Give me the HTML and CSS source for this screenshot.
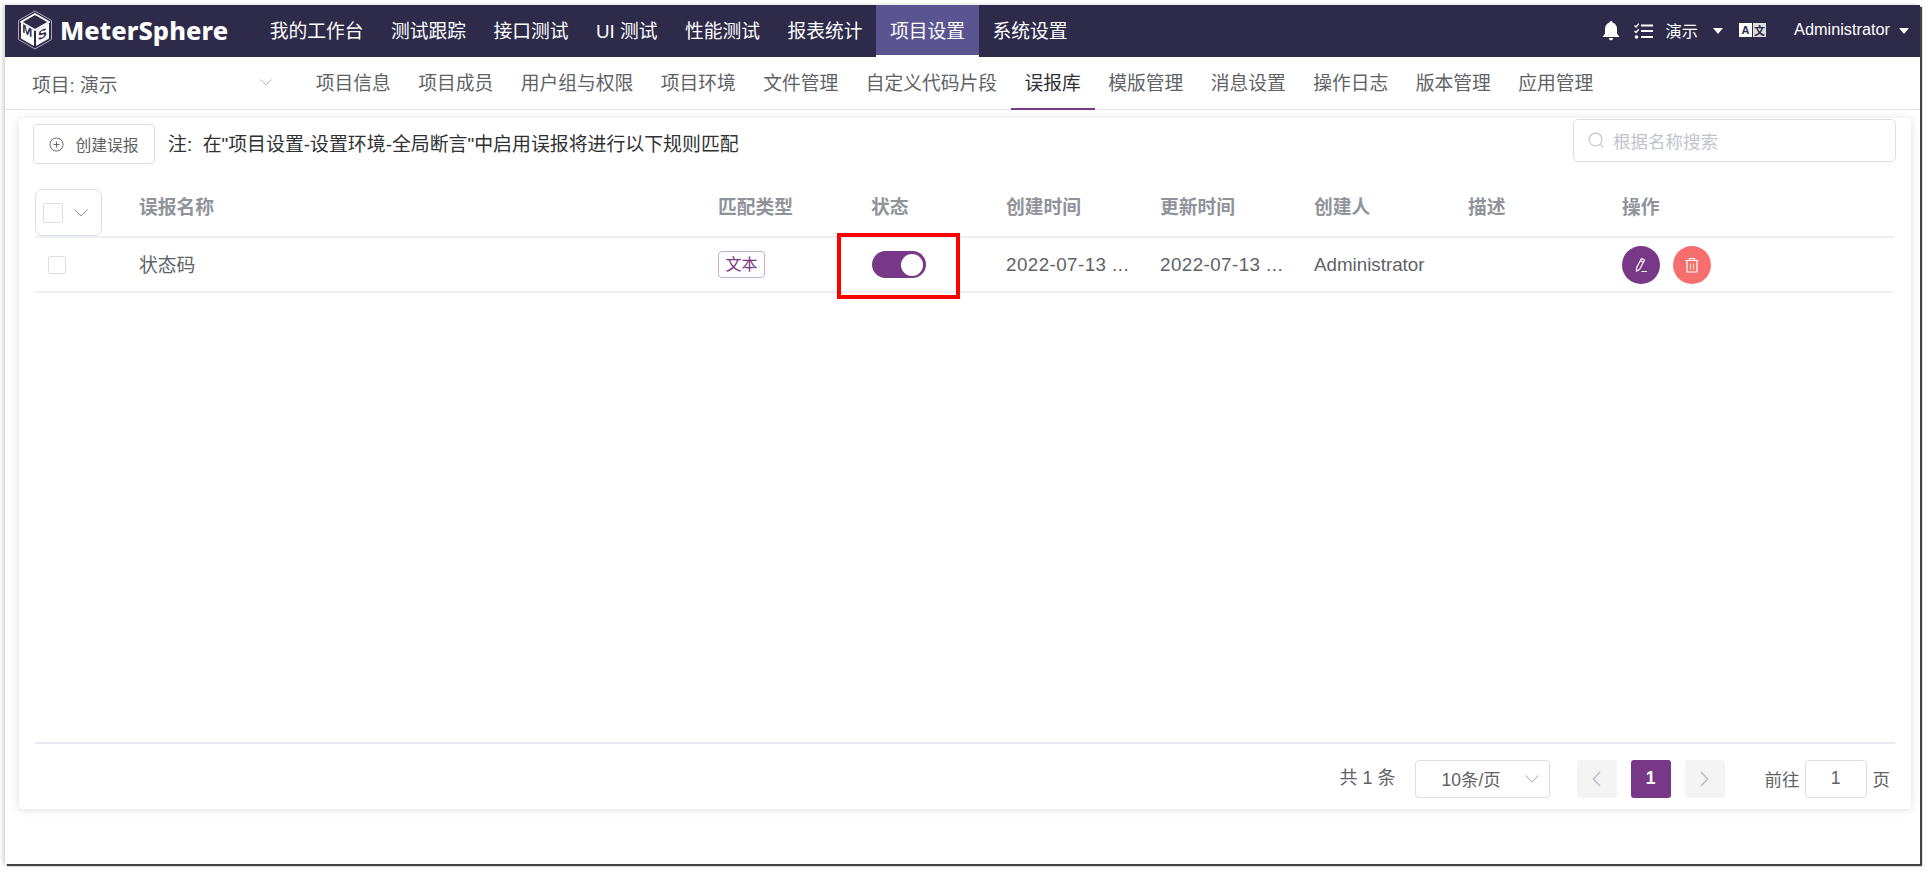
FILE: index.html
```html
<!DOCTYPE html>
<html lang="zh-CN">
<head>
    <meta charset="UTF-8">
    <meta name="viewport" content="width=device-width, initial-scale=1.0">
    <title>MeterSphere</title>
    <link rel="stylesheet" href="styles.css">
</head>
<body>
<div class="window">
    <header class="topbar">
        <div class="logo">
            <svg class="logo-cube" viewBox="0 0 36 40" width="36" height="40">
                <path d="M18 1 L34.5 10.5 V29.5 L18 39 L1.500 29.500 V10.500 Z" fill="none" stroke="#c9c8d6" stroke-width="0.8"/>
                <path d="M18 4 L32 12 L18 20 L4 12 Z" fill="#2d2a4a" stroke="#fff" stroke-width="2" stroke-linejoin="round"/>
                <path d="M4 13 L17 20.500 V36 L4 28.500 Z" fill="#fff"/>
                <path d="M32 13 L19 20.500 V36 L32 28.500 Z" fill="#fff"/>
                <text transform="matrix(1 .58 0 1 5.200 22)" class="cube-letter" font-size="12">M</text>
                <text transform="matrix(1 -.58 0 1 21 31)" class="cube-letter" font-size="13">S</text>
            </svg>
            <span class="logo-text">MeterSphere</span>
        </div>
        <nav class="main-nav">
            <a>我的工作台</a>
            <a>测试跟踪</a>
            <a>接口测试</a>
            <a>UI 测试</a>
            <a>性能测试</a>
            <a>报表统计</a>
            <a class="active">项目设置</a>
            <a>系统设置</a>
        </nav>
        <div class="top-right">
            <svg class="bell" viewBox="0 0 18 20" width="18" height="20"><path d="M9 0 C10 0 10.500 .8 10.500 1.600 C13.500 2.400 15 5 15 8 V12.500 L17.500 16 H.5 L3 12.500 V8 C3 5 4.500 2.400 7.500 1.600 C7.500 .8 8 0 9 0 Z M6.800 17 H11.200 C11 18.500 10 19.300 9 19.300 C8 19.300 7 18.500 6.800 17 Z" fill="#fff"/></svg>
            <svg class="tasks" viewBox="0 0 19 16" width="19" height="16">
                <path d="M.5 2.500 L2 4 L4.800 .8" fill="none" stroke="#fff" stroke-width="1.300"/>
                <path d="M.5 8 L2 9.500 L4.800 6.300" fill="none" stroke="#fff" stroke-width="1.300"/>
                <circle cx="2.500" cy="14" r="1.800" fill="#fff"/>
                <path d="M7 2.500 H19 M7 8 H19 M7 14 H19" stroke="#fff" stroke-width="2"/>
            </svg>
            <span class="project-name">演示</span>
            <i class="caret caret-project"></i>
            <span class="lang"><b class="lang-a">A</b><b class="lang-b">文</b></span>
            <span class="user-name">Administrator</span>
            <i class="caret caret-user"></i>
        </div>
    </header>

    <div class="subbar">
        <div class="project-select">
            <span>项目: 演示</span>
            <svg viewBox="0 0 12 7" width="12" height="7"><path d="M.5 .5 L6 6 L11.500 .5" fill="none" stroke="#b4b7bd" stroke-width="1"/></svg>
        </div>
        <nav class="sub-nav">
            <a>项目信息</a>
            <a>项目成员</a>
            <a>用户组与权限</a>
            <a>项目环境</a>
            <a>文件管理</a>
            <a>自定义代码片段</a>
            <a class="active">误报库</a>
            <a>模版管理</a>
            <a>消息设置</a>
            <a>操作日志</a>
            <a>版本管理</a>
            <a>应用管理</a>
        </nav>
    </div>

    <main class="card">
        <div class="toolbar">
            <button class="create-btn">
                <svg viewBox="0 0 16 16" width="15" height="15"><circle cx="8" cy="8" r="7" fill="none" stroke="#606266" stroke-width="1"/><path d="M8 4.800 V11.200 M4.800 8 H11.200" stroke="#606266" stroke-width="1"/></svg>
                <span>创建误报</span>
            </button>
            <span class="note">注:&nbsp;&nbsp;在"项目设置-设置环境-全局断言"中启用误报将进行以下规则匹配</span>
            <div class="search">
                <svg viewBox="0 0 18 18" width="17" height="17"><circle cx="8" cy="8" r="6.800" fill="none" stroke="#c0c4cc" stroke-width="1.200"/><path d="M13 13 L16 16" stroke="#c0c4cc" stroke-width="1.200"/></svg>
                <span>根据名称搜索</span>
            </div>
        </div>

        <div class="table-wrap">
            <table class="grid">
                <colgroup>
                    <col class="col-check"><col class="col-name"><col class="col-type"><col class="col-status">
                    <col class="col-date"><col class="col-date"><col class="col-date"><col class="col-desc"><col>
                </colgroup>
                <thead>
                    <tr>
                        <th class="check-head">
                            <div class="check-group">
                                <span class="checkbox big"></span>
                                <svg viewBox="0 0 14 8" width="14" height="8"><path d="M.5 .5 L7 7 L13.500 .5" fill="none" stroke="#909399" stroke-width="1"/></svg>
                            </div>
                        </th>
                        <th>误报名称</th>
                        <th>匹配类型</th>
                        <th>状态</th>
                        <th>创建时间</th>
                        <th>更新时间</th>
                        <th>创建人</th>
                        <th>描述</th>
                        <th>操作</th>
                    </tr>
                </thead>
                <tbody>
                    <tr>
                        <td class="check-cell"><span class="checkbox"></span></td>
                        <td><span class="row-name">状态码</span></td>
                        <td><span class="tag">文本</span></td>
                        <td class="status-cell">
                            <span class="switch"><i></i></span>
                            <div class="annotation"></div>
                        </td>
                        <td class="date-cell">2022-07-13 ...</td>
                        <td class="date-cell">2022-07-13 ...</td>
                        <td>Administrator</td>
                        <td></td>
                        <td>
                            <div class="actions">
                                <span class="round edit">
                                    <svg viewBox="0 0 18 18" width="18" height="18"><path d="M9.500 2.500 L12.500 4 L7.500 13.500 L4.500 15 L4.500 12 Z M8.500 4.800 L11.300 6.200" fill="none" stroke="#fff" stroke-width="1.200"/><path d="M9.500 15.500 H15" stroke="#fff" stroke-width="1"/></svg>
                                </span>
                                <span class="round del">
                                    <svg viewBox="0 0 18 18" width="18" height="18"><path d="M2.500 4.500 H15.500 M6.500 4.500 V2.500 H11.500 V4.500 M4 4.500 V16 H14 V4.500" fill="none" stroke="#fff" stroke-width="1.200"/><path d="M7.500 7.500 V13.500 M10.500 7.500 V13.500" stroke="#ffe3b8" stroke-width="1.200"/></svg>
                                </span>
                            </div>
                        </td>
                    </tr>
                </tbody>
            </table>
        </div>

        <footer class="pager">
            <span class="total">共 1 条</span>
            <div class="size-select">
                <span>10条/页</span>
                <svg viewBox="0 0 14 8" width="14" height="8"><path d="M.5 .5 L7 7 L13.500 .5" fill="none" stroke="#c0c4cc" stroke-width="1.200"/></svg>
            </div>
            <span class="page-btn prev"><svg viewBox="0 0 9 16" width="9" height="16"><path d="M8 1 L1.500 8 L8 15" fill="none" stroke="#c0c4cc" stroke-width="1.800"/></svg></span>
            <span class="page-btn current">1</span>
            <span class="page-btn next"><svg viewBox="0 0 9 16" width="9" height="16"><path d="M1 1 L7.500 8 L1 15" fill="none" stroke="#c0c4cc" stroke-width="1.800"/></svg></span>
            <span class="goto">前往</span>
            <span class="goto-input"><span>1</span></span>
            <span class="goto-end">页</span>
        </footer>
    </main>
</div>
</body>
</html>
```

FILE: styles.css
```css
* { box-sizing: border-box; }
html, body { margin: 0; height: 873px; overflow: hidden; background: #fff; }
body { font-family: "Liberation Sans", "Noto Sans CJK SC", Arial, sans-serif; font-size: 18.75px; color: #606266; }

.window { margin: 5px 0 0 5px; width: 1915px; height: 859px; background: #fff; display: flex; flex-direction: column; box-shadow: 2px 2px 1px #444, -2px 0 4px #d0d0d0; }

/* top bar */
.topbar { height: 52px; flex: none; background: #2d2a4a; color: #fff; display: flex; align-items: stretch; }
.logo { width: 251px; flex: none; display: flex; align-items: center; padding-left: 12px; }
.logo-cube { flex: none; margin-top: -2px; }
.cube-letter { font-family: "Liberation Sans", sans-serif; font-weight: 700; fill: #2d2a4a; }
.logo-text { margin-left: 7px; font-family: "Noto Sans", sans-serif; font-weight: 800; font-size: 25.4px; letter-spacing: .1px; line-height: 1; }
.main-nav { display: flex; }
.main-nav a { display: flex; align-items: center; padding: 0 13.75px 3px; height: 52px; }
.main-nav a.active { background: #5a5490; border-bottom: 2px solid #fff; padding-bottom: 1px; }
.top-right { margin-left: auto; display: flex; align-items: center; font-size: 16.3px; padding-right: 11px; }
.top-right span { margin-top: -3px; }
.bell { margin-right: 14px; }
.tasks { margin-right: 13px; }
.caret { width: 0; height: 0; border-left: 5px solid transparent; border-right: 5px solid transparent; border-top: 6px solid #fff; }
.caret-project { margin-left: 15px; }
.lang { display: flex; gap: 1px; margin-left: 16px; }
.lang b { width: 13px; height: 14px; display: flex; align-items: center; justify-content: center; color: #2d2a4a; font-size: 11px; }
.lang-a { background: #fff; }
.lang-b { background: #ddd; }
.user-name { margin-left: 28px; }
.caret-user { margin-left: 9px; }

/* second bar */
.subbar { height: 53px; flex: none; display: flex; align-items: stretch; border-bottom: 1px solid #e6e6e6; }
.project-select { width: 297px; flex: none; padding: 0 30px 0 27px; display: flex; align-items: center; justify-content: space-between; }
.project-select svg { margin-top: -1px; }
.sub-nav { display: flex; }
.sub-nav a { display: flex; align-items: center; padding: 0 13.75px 4px; height: 53px; white-space: nowrap; }
.sub-nav a.active { color: #303133; border-bottom: 2px solid #783887; padding-bottom: 2px; }

/* card */
.card { margin: 8px 9px 0 14px; height: 691px; flex: none; background: #fff; border-radius: 4px; box-shadow: 0 1px 10px rgba(60, 60, 110, .16); padding: 1px 15px 11px 14px; display: flex; flex-direction: column; }
.toolbar { height: 70px; flex: none; display: flex; align-items: flex-start; }
.create-btn { margin-top: 5px; height: 40px; width: 122px; background: #fff; border: 1px solid #dcdfe6; border-radius: 4px; display: flex; align-items: center; justify-content: center; gap: 11px; font: inherit; font-size: 15.8px; color: #606266; padding: 0; }
.note { margin: 3px 0 0 13px; height: 40px; display: flex; align-items: center; color: #303133; font-size: 18.9px; white-space: pre; }
.search { margin-left: auto; width: 323px; height: 43px; border: 1px solid #dcdfe6; border-radius: 5px; display: flex; align-items: center; padding-left: 14px; gap: 8px; color: #c0c4cc; font-size: 17.5px; }

.table-wrap { flex: 1; padding: 0 2px; }
.grid { width: 1859px; border-collapse: collapse; table-layout: fixed; }
.col-check { width: 92px; }
.col-name { width: 579px; }
.col-type { width: 153px; }
.col-status { width: 135px; }
.col-date { width: 154px; }
.col-desc { width: 154px; }
.grid th { height: 47px; padding: 0 12px 15px; text-align: left; font-weight: 700; color: #909399; border-bottom: 2px solid #eeeef5; }
.grid td { height: 55px; padding: 0 12px; border-bottom: 2px solid #eeeef5; white-space: nowrap; }
.grid th.check-head { padding: 0; }
.check-group { width: 67px; height: 47px; border: 1px solid #dcdfe6; border-radius: 7px; display: flex; align-items: center; padding-left: 7px; gap: 11px; }
.checkbox { display: block; width: 18px; height: 18px; border: 1px solid #dcdfe6; border-radius: 2px; background: #fff; }
.checkbox.big { width: 20px; height: 20px; }
.grid td.check-cell { padding-left: 13px; }
.row-name { position: relative; top: -1px; }
.date-cell { letter-spacing: .45px; }
.tag { display: inline-block; width: 47px; height: 27px; line-height: 25px; text-align: center; font-size: 16px; color: #783887; border: 1px solid #c9aed0; border-radius: 4px; }
.switch { display: block; width: 54px; height: 27px; margin-left: 1px; border-radius: 14px; background: #783887; position: relative; }
.switch i { position: absolute; top: 2.5px; right: 3px; width: 22px; height: 22px; border-radius: 50%; background: #fff; }
.status-cell { position: relative; }
.annotation { position: absolute; left: -22px; top: -5px; width: 123px; height: 66px; border: 4px solid #f00; }
.actions { display: flex; gap: 13px; }
.round { width: 38px; height: 38px; border-radius: 50%; display: flex; align-items: center; justify-content: center; }
.edit { background: #783887; }
.del { background: #f76e6e; }

/* pagination */
.pager { flex: none; border-top: 2px solid #e9e9f2; margin: 0 1px 0 2px; padding: 15px 5px 0 0; display: flex; align-items: center; justify-content: flex-end; height: 56px; font-size: 17.5px; }
.total { margin-top: -5px; font-size: 18px; }
.goto { margin-top: -1px; }
.goto-end { margin-top: -1px; }
.goto-input span { margin-top: -1px; }
.size-select { width: 135px; height: 38px; margin: 0 27px 0 19px; border: 1px solid #dcdfe6; border-radius: 4px; display: flex; align-items: center; padding: 0 10px 0 26px; justify-content: space-between; }
.size-select span { margin-top: -1px; }
.page-btn { width: 40px; height: 38px; background: #f4f4f5; border-radius: 3px; margin-right: 14px; display: flex; align-items: center; justify-content: center; }
.page-btn.current { background: #783887; color: #fff; font-weight: 700; }
.page-btn.next { margin-right: 40px; }
.goto-input { width: 62px; height: 38px; margin: 0 6px 0 5px; border: 1px solid #dcdfe6; border-radius: 4px; display: flex; align-items: center; justify-content: center; }
```
